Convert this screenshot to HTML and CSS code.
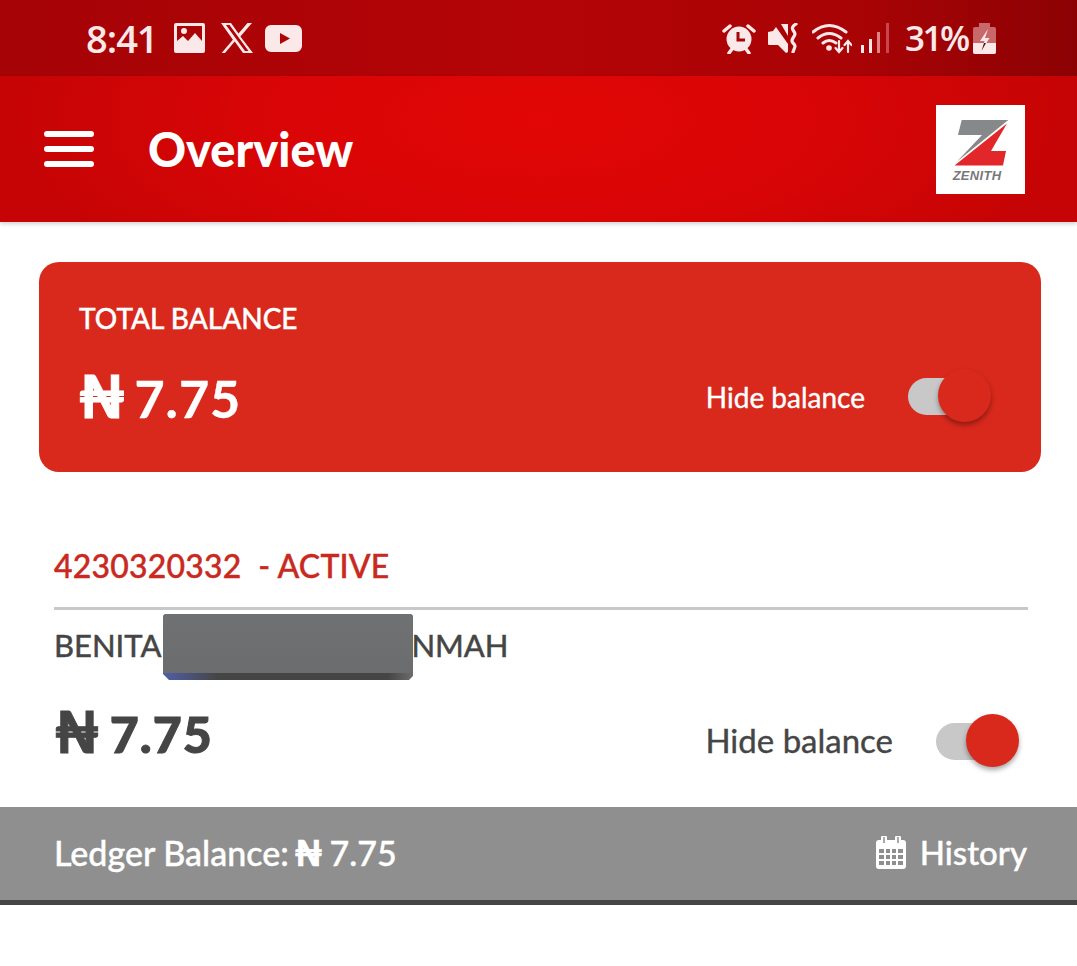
FILE: index.html
```html
<!DOCTYPE html>
<html lang="en">
<head>
<meta charset="utf-8">
<title>Overview</title>
<link rel="stylesheet" href="styles.css">
</head>
<body>
<div class="status">
  <div class="status-left">
    <span class="clock">8:41</span>
    <svg class="i-img" viewBox="0 0 31 30"><path fill-rule="evenodd" fill="#fbe9ea" d="M2 0h27a2 2 0 0 1 2 2v26a2 2 0 0 1-2 2H2a2 2 0 0 1-2-2V2a2 2 0 0 1 2-2zM3 3v15l6-5 5 5 7-8 7 8V3z"/><circle cx="10" cy="8" r="3" fill="#fbe9ea"/></svg>
    <svg class="i-x" viewBox="0 0 32 30"><path fill="#fbe9ea" fill-rule="evenodd" d="M0 0h10l7.500 10.500L26.500 0H31L19.400 13.400 32 30H22l-8.300-11.400L4 30H.6l11.300-13.300zM5 2l19 26h3.500L8.500 2z"/></svg>
    <svg class="i-yt" viewBox="0 0 37 27"><path fill-rule="evenodd" fill="#fbe9ea" d="M6 0h25a6 6 0 0 1 6 6v15a6 6 0 0 1-6 6H6a6 6 0 0 1-6-6V6a6 6 0 0 1 6-6zM15 8v11l10-5.500z"/></svg>
  </div>
  <div class="status-right">
    <svg class="i-alarm" viewBox="0 0 34 31"><g fill="none" stroke="#fbe9ea"><path d="M2 8l6-5M32 8l-6-5M10 26l-3 4M24 26l3 4" stroke-width="3.500" stroke-linecap="round"/><circle cx="17" cy="16" r="11.500" fill="#fbe9ea" stroke-width="2"/><path d="M16 9v8h7" stroke="#a60508" stroke-width="3"/></g></svg>
    <svg class="i-mute" viewBox="0 0 32 30"><path fill="#fbe9ea" d="M0 9l5-1L8 4l12 17v8l-2 1-8-8H1a1 1 0 0 1-1-1z"/><path d="M13 1l7 0v12z" fill="#fbe9ea"/><path d="M28 1q-5 3-3 6t2 4-2 4 0 5 2 3-2 6" fill="none" stroke="#fbe9ea" stroke-width="3.200" stroke-linecap="round"/></svg>
    <svg class="i-wifi" viewBox="0 0 40 31"><g fill="none" stroke="#fbe9ea" stroke-linecap="round"><path d="M1 9q16-13 33 0M6 15q11-9 23 0M11 20q6-5 13 0" stroke-width="3"/><path d="M27 18v11M23.500 25l3.500 4 3.500-4M36 29V18M32.500 22l3.500-4 3.500 4" stroke-width="2.200"/></g><circle cx="17" cy="25" r="2.800" fill="#fbe9ea"/></svg>
    <svg class="i-signal" viewBox="0 0 28 30"><rect y="22" width="3" height="8" fill="#fbe9ea"/><rect x="8" y="16" width="3" height="14" fill="#fbe9ea"/><rect x="16" y="9" width="3" height="21" fill="#e08285"/><rect x="25" y="0" width="3" height="30" fill="#c9474a"/></svg>
    <span class="pct">31%</span>
    <svg class="i-batt" viewBox="0 0 23 31"><rect x="6" y="0" width="11" height="4" fill="#c9686a"/><rect y="4" width="23" height="27" rx="2" fill="#c9686a"/><path d="M0 20h23v9a2 2 0 0 1-2 2H2a2 2 0 0 1-2-2z" fill="#fbe9ea"/><path d="M15 6 7 18h4.500l-3 10 8-13H12z" fill="#fbe9ea"/><path d="M11 20h2l-4.500 8z" fill="#4a1012"/></svg>
  </div>
</div>

<header class="appbar">
  <div class="burger"><span></span><span></span><span></span></div>
  <h1 class="title">Overview</h1>
  <div class="logo">
    <svg viewBox="0 0 89 89"><path fill="#87888a" d="M25.700 15H72.300L21 56.500 46 30H22z"/><path fill="#e1272a" d="M71 18.500 55 46H70L67 60.500H18.500z"/><text x="41" y="75" class="logo-text">ZENITH</text></svg>
  </div>
</header>

<main class="content">
  <section class="total">
    <div class="total-label">TOTAL BALANCE</div>
    <div class="total-row">
      <div class="total-amount"><span class="naira">₦</span> 7.75</div>
      <div class="hide hide-light">
        <span>Hide balance</span>
        <div class="switch"><div class="knob"></div></div>
      </div>
    </div>
  </section>

  <section class="account">
    <div class="acct-no">4230320332&nbsp; - ACTIVE</div>
    <div class="acct-name"><span>BENITA</span><span class="name-end">NMAH</span><div class="redact"></div></div>
    <div class="acct-row">
      <div class="acct-amount"><span class="naira">₦</span> 7.75</div>
      <div class="hide hide-dark">
        <span>Hide balance</span>
        <div class="switch"><div class="knob"></div></div>
      </div>
    </div>
  </section>

  <footer class="ledger">
    <div>Ledger Balance: <span class="naira naira-small">₦</span> 7.75</div>
    <div class="history">
      <svg class="i-cal" viewBox="0 0 30 33"><path fill-rule="evenodd" fill="#fff" d="M3 4h2V2a3 3 0 0 1 6 0v2h8V2a3 3 0 0 1 6 0v2h2a3 3 0 0 1 3 3v23a3 3 0 0 1-3 3H3a3 3 0 0 1-3-3V7a3 3 0 0 1 3-3zM3 13v4h5v-4zm7 0v4h4v-4zm6 0v4h4v-4zm6 0v4h5v-4zM3 19v4h5v-4zm7 0v4h4v-4zm6 0v4h4v-4zm6 0v4h5v-4zM3 25v4h5v-4zm7 0v4h4v-4zm6 0v4h4v-4zm6 0v4h5v-4z"/><path d="M8 1v6M22 1v6" stroke="#8f8f8f" stroke-width="1.500" fill="none"/></svg>
      <span>History</span>
    </div>
  </footer>
</main>
</body>
</html>
```
FILE: styles.css
```css
* { box-sizing: border-box; }
html, body { margin: 0; padding: 0; background: #fff; }
body {
  width: 1077px;
  height: 966px;
  overflow: hidden;
  font-family: "Lato", "DejaVu Sans", sans-serif;
}
svg { display: block; flex: none; }

.status {
  height: 76px;
  padding: 0 81px 0 86px;
  display: flex;
  align-items: center;
  justify-content: space-between;
  background: linear-gradient(90deg, #a50306 0%, #b40407 50%, #a80305 80%, #8c0204 100%);
  color: #fbe9ea;
}
.status-left, .status-right { display: flex; align-items: center; }
.clock, .pct {
  font-family: "Open Sans", sans-serif;
  font-weight: 600;
  line-height: 40px;
}
.clock { width: 88px; font-size: 38px; letter-spacing: -1px; }
.i-img { width: 31px; height: 30px; }
.i-x { width: 32px; height: 30px; margin-left: 16px; }
.i-yt { width: 37px; height: 27px; margin-left: 12px; }
.i-alarm { width: 34px; height: 31px; }
.i-mute { width: 32px; height: 30px; margin-left: 12px; }
.i-wifi { width: 40px; height: 31px; margin-left: 12px; }
.i-signal { width: 28px; height: 30px; margin-left: 9px; }
.pct { margin-left: 16px; width: 68px; font-size: 35px; letter-spacing: -2.500px; }
.i-batt { width: 23px; height: 31px; }

.appbar {
  height: 146px;
  padding: 0 52px 0 44px;
  display: flex;
  align-items: center;
  background: radial-gradient(ellipse 520px 200px at 50% 30%, #e20606 0%, #d80506 55%, #c70405 100%);
  box-shadow: 0 2px 4px rgba(0, 0, 0, .18);
  position: relative;
}
.burger { width: 50px; display: flex; flex-direction: column; gap: 9px; }
.burger span { height: 6px; border-radius: 3px; background: #fff; }
.title {
  margin: 0 0 0 54px;
  flex: 1;
  font-size: 47px;
  line-height: 52px;
  font-weight: 900;
  color: #fff;
}
.logo { width: 89px; height: 89px; background: #fff; }
.logo svg { width: 89px; height: 89px; }
.logo-text {
  font-family: "Liberation Sans", sans-serif;
  font-size: 13px;
  font-weight: 700;
  font-style: italic;
  fill: #77787a;
  text-anchor: middle;
  letter-spacing: .3px;
}

.naira {
  font-size: 1.150em;
  line-height: 0;
  font-weight: 900;
  -webkit-text-stroke: 1px currentColor;
  letter-spacing: 0;
}
.naira-small { font-size: 1.050em; -webkit-text-stroke: .6px currentColor; margin: 0 -2px 0 -3px; }

.content { padding-top: 40px; }

.total {
  margin: 0 36px 0 39px;
  height: 210px;
  padding: 38px 73px 0 40px;
  background: #d8291c;
  border-radius: 20px;
  color: #fff;
}
.total-label { font-size: 28px; line-height: 36px; font-weight: 500; -webkit-text-stroke: .4px #fff; }
.total-row { margin-top: 32px; display: flex; align-items: center; justify-content: space-between; height: 60px; }
.total-amount { font-size: 52px; line-height: 60px; font-weight: 700; letter-spacing: 1px; -webkit-text-stroke: .4px #fff; }
.total-amount .naira { margin: 0 -5px 0 -1px; }

.hide { display: flex; align-items: center; }
.hide-light { font-size: 28px; color: #fff; -webkit-text-stroke: .4px #fff; margin-top: -3px; }
.hide-dark { font-size: 33px; color: #454545; -webkit-text-stroke: .4px #454545; margin-top: 11px; }
.hide-dark .switch { margin-top: 4px; }
.switch {
  position: relative;
  width: 60px;
  height: 37px;
  background: #c8c8c8;
  border-radius: 19px;
  margin-left: 43px;
}
.knob {
  position: absolute;
  left: 30px;
  top: -9px;
  width: 53px;
  height: 53px;
  border-radius: 50%;
  background: #d8291c;
  box-shadow: 0 3px 5px rgba(0, 0, 0, .35);
}

.account { padding: 75px 49px 0 54px; color: #454545; }
.acct-no {
  height: 60px;
  font-size: 32px;
  line-height: 38px;
  font-weight: 500;
  letter-spacing: .2px;
  color: #c9291e;
  -webkit-text-stroke: .4px #c9291e;
}
.acct-name {
  position: relative;
  border-top: 3px solid #c8c8c8;
  padding-top: 16px;
  height: 86px;
  font-size: 31px;
  line-height: 38px;
  white-space: nowrap;
  -webkit-text-stroke: .5px #454545;
}
.name-end { margin-left: 250px; }
.redact {
  position: absolute;
  left: 109px;
  top: 4px;
  width: 250px;
  height: 66px;
  background:
    linear-gradient(180deg, #6f7172, #6a6c6d) top / 100% 59px no-repeat,
    linear-gradient(90deg, #4f5fa8, #454545 22%, #454545 90%, #6d6d6d);
  clip-path: polygon(0 2px, 2px 0, 248px 0, 100% 2px, 100% 62px, 246px 100%, 6px 100%, 0 60px);
}
.acct-row { display: flex; align-items: center; justify-content: space-between; height: 60px; margin-top: 11px; padding-right: 32px; }
.acct-amount { font-size: 50px; line-height: 60px; font-weight: 900; letter-spacing: 1px; -webkit-text-stroke: 1px #454545; }
.acct-amount .naira { margin-right: -3px; }

.ledger {
  margin-top: 43px;
  height: 98px;
  padding: 0 50px 3px 54px;
  display: flex;
  align-items: center;
  justify-content: space-between;
  background: #8f8f8f;
  border-bottom: 5px solid #454545;
  color: #fff;
  font-size: 34px;
  font-weight: 500;
  -webkit-text-stroke: .4px #fff;
}
.history { display: flex; align-items: center; gap: 14px; font-size: 33px; }
.i-cal { width: 30px; height: 33px; }
```
